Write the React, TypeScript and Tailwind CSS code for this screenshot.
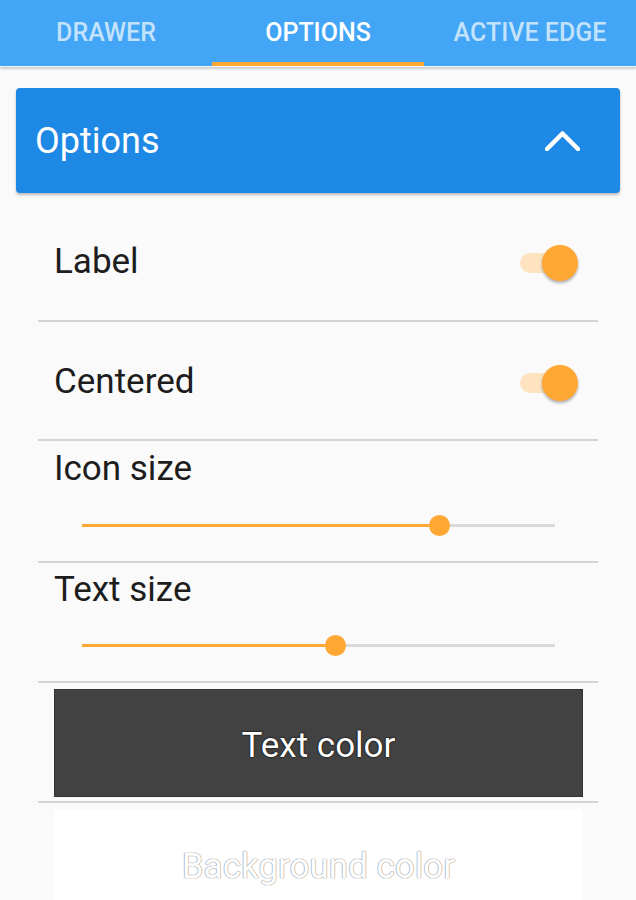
import React from 'react';

const Switch: React.FC = () => (
  <div className="relative w-[58px] h-[36px] flex items-center">
    <div className="h-[20px] w-[48px] rounded-full bg-[#fde3c0]" />
    <div className="absolute right-0 top-0 w-[36px] h-[36px] rounded-full bg-[#ffa733] shadow-[0_2px_3px_rgba(0,0,0,0.3)]" />
  </div>
);

const Slider: React.FC<{ value: number }> = ({ value }) => (
  <div className="relative h-[20px] ml-[44px] mr-[43px] flex items-center">
    <div className="h-[3px] w-full bg-[#dadada]" />
    <div className="absolute left-0 h-[3px] bg-[#ffa733]" style={{ width: `${value}%` }} />
    <div
      className="absolute w-[21px] h-[21px] -ml-[10px] rounded-full bg-[#ffa733]"
      style={{ left: `${value}%` }}
    />
  </div>
);

export default function App() {
  return (
    <div className="w-[636px] h-[900px] overflow-hidden bg-[#fafafa] font-['Roboto',sans-serif]">
      <header className="relative bg-[#42a5f5] h-[67px] flex shadow-[0_2px_2px_rgba(0,0,0,0.18)] border-b border-[#f2f8fd]">
        {['DRAWER', 'OPTIONS', 'ACTIVE EDGE'].map((t, i) => (
          <div
            key={t}
            className={
              i === 1
                ? 'relative flex-1 flex items-center justify-center text-[25px] font-medium text-white'
                : 'relative flex-1 flex items-center justify-center text-[25px] font-medium text-white/70'
            }
          >
            {t}
            {i === 1 && <div className="absolute left-0 right-0 bottom-0 h-[4px] bg-[#ffa733]" />}
          </div>
        ))}
      </header>

      <div className="px-[16px] pt-[21px]">
        <div className="h-[105px] rounded-[4px] bg-[#1e88e5] flex items-center justify-between pl-[19px] pr-[40px] shadow-[0_2px_3px_rgba(0,0,0,0.25)]">
          <span className="text-[36px] text-white">Options</span>
          <svg width="35" height="20" viewBox="0 0 35 20">
            <polyline points="2,18 17.5,2.5 33,18" fill="none" stroke="#fff" strokeWidth="4.5" strokeLinecap="round" strokeLinejoin="round" />
          </svg>
        </div>
      </div>

      <div className="mx-[38px] mt-[9px] text-[35px] text-[#1d1d1d]">
        <div className="h-[120px] border-b-2 border-[#d4d4d4] flex items-center justify-between pl-[16px] pr-[20px] pt-[3px]">
          <span>Label</span>
          <Switch />
        </div>
        <div className="h-[119px] border-b-2 border-[#d4d4d4] flex items-center justify-between pl-[16px] pr-[20px] pt-[4px]">
          <span>Centered</span>
          <Switch />
        </div>
        <div className="h-[122px] border-b-2 border-[#d4d4d4] pl-[16px] pt-[8px]">
          <div className="leading-[40px]">Icon size</div>
          <div className="-ml-[16px] mt-[26px]">
            <Slider value={75.5} />
          </div>
        </div>
        <div className="h-[120px] border-b-2 border-[#d4d4d4] pl-[16px] pt-[7px]">
          <div className="leading-[40px]">Text size</div>
          <div className="-ml-[16px] mt-[25px]">
            <Slider value={53.4} />
          </div>
        </div>
        <div className="h-[120px] border-b-2 border-[#d4d4d4] pt-[6px]">
          <div className="ml-[16px] mr-[15px] h-[108px] bg-[#424242] border border-[#333] flex items-center justify-center pt-[6px] text-white text-[35px] [text-shadow:0_0_2px_#000,0_0_1px_#000]">
            Text color
          </div>
        </div>
        <div className="pt-[6px]">
          <div className="ml-[16px] mr-[15px] h-[108px] bg-white flex items-center justify-center pt-[8px] text-white text-[35px] [text-shadow:0_0_1px_#999,0_0_1px_#999,0_0_1px_#999]">
            Background color
          </div>
        </div>
      </div>
    </div>
  );
}
